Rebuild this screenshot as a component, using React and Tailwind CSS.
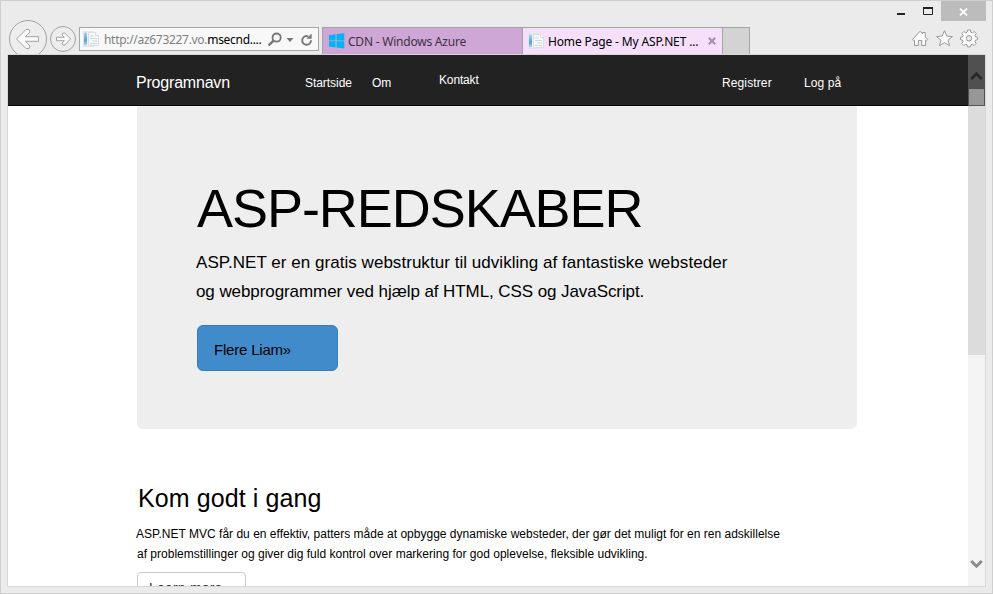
import React from 'react';

const SANS = "font-['Liberation_Sans',Arial,sans-serif]";
const UI = "font-['Noto_Sans','Open_Sans',sans-serif]";

function PageIcon() {
  return (
    <svg width="16" height="16" viewBox="0 0 16 16" className="shrink-0">
      <defs>
        <linearGradient id="spine" x1="0" y1="0" x2="0" y2="1">
          <stop offset="0" stopColor="#a9d3ee" />
          <stop offset="0.6" stopColor="#5a9fd0" />
          <stop offset="1" stopColor="#b5d8ee" />
        </linearGradient>
      </defs>
      <path d="M0.5 0.5h10v15h-10z" fill="#eef3f6" stroke="#dfe7eb" />
      <path d="M1 1.5h3v13h-3z" fill="url(#spine)" />
      <path d="M5.5 1.5h7l3 3v10h-10z" fill="#f6f8f9" stroke="#d8dfe3" />
      <path d="M12.5 1.5v3h3" fill="#fff" stroke="#d3dbe0" />
      <path d="M7 5h4M7 7.5h7M9 10h5M7 12.5h7" stroke="#cdd7dd" />
    </svg>
  );
}

function WindowButtons() {
  return (
    <div className="flex h-5 items-start">
      <svg width="45" height="20" viewBox="0 0 45 20">
        <path d="M1 12h8v2h-8z" fill="#222" />
        <path d="M27.5 6.5h9v7h-9z" fill="none" stroke="#222" />
        <path d="M27 6h10v2h-10z" fill="#222" />
      </svg>
      <div className="flex h-5 w-[45px] items-center justify-center bg-[#bcbcbc] pt-px">
        <svg width="9" height="8" viewBox="0 0 9 8">
          <path d="M1 0.7L8 7.3M8 0.7L1 7.3" stroke="#fff" strokeWidth="1.8" />
        </svg>
      </div>
    </div>
  );
}

function NavButtons() {
  return (
    <svg width="69" height="34" viewBox="8 20 69 34" className="shrink-0" fill="none" stroke="#a3a3a3">
      <circle cx="28" cy="39" r="18.5" fill="#ededed" />
      <circle cx="63" cy="39" r="12.5" fill="#ededed" />
      <path d="M16.5 39L26 29.5L29 29.5L30 32L25.3 36.7H38.5V41.3H25.3L30 46L29 48.5H26Z" fill="#fafafa" strokeLinejoin="round" />
      <path d="M70.5 39L64.8 33L62.5 33.3L62 35L64.3 37.3H56.5V40.7H64.3L62 43L62.5 44.8L64.8 45Z" fill="#fafafa" strokeLinejoin="round" />
    </svg>
  );
}

function AddressBar() {
  return (
    <div className="mt-[7px] ml-[2px] flex h-6 w-60 items-center border border-[#a5a5a5] bg-[#f8f8f8]">
      <div className="ml-[3px] flex"><PageIcon /></div>
      <div className={`${UI} mt-[2px] ml-[5px] w-[162px] shrink-0 text-[12px] leading-4 tracking-[-0.3px] whitespace-nowrap text-[#808080]`}>
        http://az673227.vo.<span className="text-black">msecnd....</span>
      </div>
      <svg width="50" height="20" viewBox="0 0 50 20" className="shrink-0" fill="none" stroke="#757575">
        <circle cx="10.6" cy="8.6" r="4.1" strokeWidth="1.8" />
        <path d="M7.6 11.6L2.6 16.4" strokeWidth="2.4" />
        <path d="M20.5 9h7l-3.5 4z" fill="#757575" stroke="none" />
        <path d="M42.2 7.3A4.4 4.4 0 1 0 45 11.2" strokeWidth="1.9" />
        <path d="M41 4.5h4.8v5.2h-4.8z" fill="none" stroke="none" />
        <path d="M45.6 4.5v5.2h-5.2z" fill="#757575" stroke="none" />
      </svg>
    </div>
  );
}

function Tabs() {
  return (
    <div className={`${UI} mt-[7px] ml-[3px] flex h-[27px] border-t border-l border-[#a3a3a3] text-[12px] leading-4 whitespace-nowrap`}>
      <div className="flex w-[199px] items-center bg-[#cfa7d6] pl-[6px] text-[#3e3044]">
        <svg width="16" height="16" viewBox="0 0 16 16" fill="#00b5f1">
          <path d="M0 2.2L6.6 1.3V7.4H0zM7.5 1.2L15.3 0V7.4H7.5zM0 8.3H6.6V14.4L0 13.5zM7.5 8.3H15.3V15.6L7.5 14.5z" />
        </svg>
        <span className="mt-[2px] ml-[3px] tracking-[-0.22px]">CDN - Windows Azure</span>
      </div>
      <div className="flex w-[201px] items-center border-x border-[#a3a3a3] bg-[#f6dffa] pl-[5px] text-black">
        <PageIcon />
        <span className="mt-[2px] ml-[4px] w-[160px] tracking-[-0.14px]">Home Page - My ASP.NET ...</span>
        <svg width="8" height="8" viewBox="0 0 8 8">
          <path d="M0.8 0.8L7.2 7.2M7.2 0.8L0.8 7.2" stroke="#a18fa5" strokeWidth="2" />
        </svg>
      </div>
      <div className="w-[27px] border-r border-[#a3a3a3] bg-[#d3d3d3]" />
    </div>
  );
}

function Tools() {
  return (
    <svg width="69" height="20" viewBox="911 28 69 20" className="mt-[8px] mr-[12px] ml-auto shrink-0" fill="#fcfcfc" stroke="#999" strokeLinejoin="round">
      <path d="M912.5 39.5L920 31.2L922.5 33.8V32.5H925.3V36.8L927.8 39.5L926.8 40.3H925.6V45.5H921.7V40.5H918.4V45.5H914.5V40.3H913.2Z" />
      <path d="M944.5 30.6L946.8 36.1L952.5 36.5L948 40.2L949.6 45.7L944.5 42.6L939.4 45.7L941 40.2L936.5 36.5L942.2 36.1Z" />
      <path transform="translate(0.3 -0.8)" d="M967.2 30.8h3l.4 2.2 1.5.7 1.9-1.4 2 2-1.3 1.9.6 1.5 2 .4v2.4l-2.1.4-.6 1.5 1.3 1.9-2 2-1.9-1.3-1.4.6-.4 2h-3l-.4-2-1.4-.6-1.9 1.3-2-2 1.3-1.9-.6-1.5-2-.4v-2.4l2-.4.6-1.5-1.3-1.9 2-2 1.9 1.4 1.4-.7z" />
      <circle cx="969" cy="38.3" r="2.7" fill="#ebebeb" />
    </svg>
  );
}

function Navbar() {
  return (
    <nav className={`${SANS} relative z-10 flex h-[51px] border-b border-[#080808] bg-[#222] text-[12px] leading-4 whitespace-nowrap text-white`}>
      <span className="mt-[18px] ml-[128px] w-[169px] text-[16px] leading-5 tracking-[-0.2px]">Programnavn</span>
      <span className="mt-5 w-[67px] tracking-[-0.05px]">Startside</span>
      <span className="mt-5 w-[67px]">Om</span>
      <span className="mt-[17px] w-[283px] tracking-[-0.15px]">Kontakt</span>
      <span className="mt-5 w-[82px] tracking-[0.12px]">Registrer</span>
      <span className="mt-5 tracking-[0.1px]">Log på</span>
    </nav>
  );
}

function Hero() {
  return (
    <section className="-mt-1 ml-[129px] flex h-[327px] w-[720px] flex-col items-start rounded-md bg-[#eee] pl-[60px] whitespace-nowrap text-black">
      <h1 className="mt-[74px] text-[54px] leading-[64px] tracking-[-1.05px]">ASP-REDSKABER</h1>
      <p className="mt-[8px] -ml-px text-[17px] leading-[29px]">
        <span className="block tracking-[0.04px]">ASP.NET er en gratis webstruktur til udvikling af fantastiske websteder</span>
        <span className="block tracking-[-0.08px]">og webprogrammer ved hjælp af HTML, CSS og JavaScript.</span>
      </p>
      <button className="mt-[19px] flex h-[46px] w-[141px] items-center rounded-md border border-[#357ebd] bg-[#428bca] pt-[3px] pl-4 text-[15px] leading-5 tracking-[-0.2px]">
        Flere Liam»
      </button>
    </section>
  );
}

function GettingStarted() {
  return (
    <section className="ml-[128px] flex flex-col items-start whitespace-nowrap text-black">
      <h2 className="mt-[52px] ml-[2px] text-[25px] leading-[34px] tracking-[0.1px]">Kom godt i gang</h2>
      <p className="mt-[9px] text-[12px] leading-5">
        <span className="block tracking-[0.01px]">ASP.NET MVC får du en effektiv, patters måde at opbygge dynamiske websteder, der gør det muligt for en ren adskillelse</span>
        <span className="ml-px block tracking-[0.01px]">af problemstillinger og giver dig fuld kontrol over markering for god oplevelse, fleksible udvikling.</span>
      </p>
      <button className="mt-2 ml-px flex h-[34px] w-[109px] rounded border border-[#ccc] bg-white pt-[5px] pl-[11px] text-[14px] leading-5 tracking-[0.2px] text-[#333]">
        Learn more
      </button>
    </section>
  );
}

function Scrollbar() {
  return (
    <div className="flex w-[17px] shrink-0 flex-col items-center bg-[#f4f4f4]">
      <div className="flex h-[34px] w-full justify-center bg-[#505050]">
        <svg width="13" height="10" viewBox="0 0 13 10" className="mt-4">
          <path d="M1.2 8L6.5 2.8L11.8 8" fill="none" stroke="#292929" strokeWidth="3" />
        </svg>
      </div>
      <div className="flex h-[17px] w-full justify-center border-b border-[#555] bg-[#505050]">
        <div className="w-[15px] bg-[#979797]" />
      </div>
      <div className="h-[249px] w-full bg-[#dcdcdc]" />
      <svg width="13" height="10" viewBox="0 0 13 10" className="mt-auto mb-[17px]">
        <path d="M1.2 2L6.5 7.2L11.8 2" fill="none" stroke="#8b8b8b" strokeWidth="3" />
      </svg>
    </div>
  );
}

export default function App() {
  return (
    <div className="flex h-[594px] w-[993px] flex-col overflow-hidden border border-[#cfcfcf] bg-[#ebebeb]">
      <div className="flex h-[19px] justify-end pr-[6px]"><WindowButtons /></div>
      <header className="flex h-[34px] items-start pl-[7px]">
        <NavButtons />
        <AddressBar />
        <Tabs />
        <Tools />
      </header>
      <main className={`${SANS} ml-[6px] flex h-[533px] w-[979px] overflow-hidden border border-[#d7d7d7] bg-white`}>
        <div className="h-full w-[960px] overflow-hidden">
          <Navbar />
          <Hero />
          <GettingStarted />
        </div>
        <Scrollbar />
      </main>
    </div>
  );
}
